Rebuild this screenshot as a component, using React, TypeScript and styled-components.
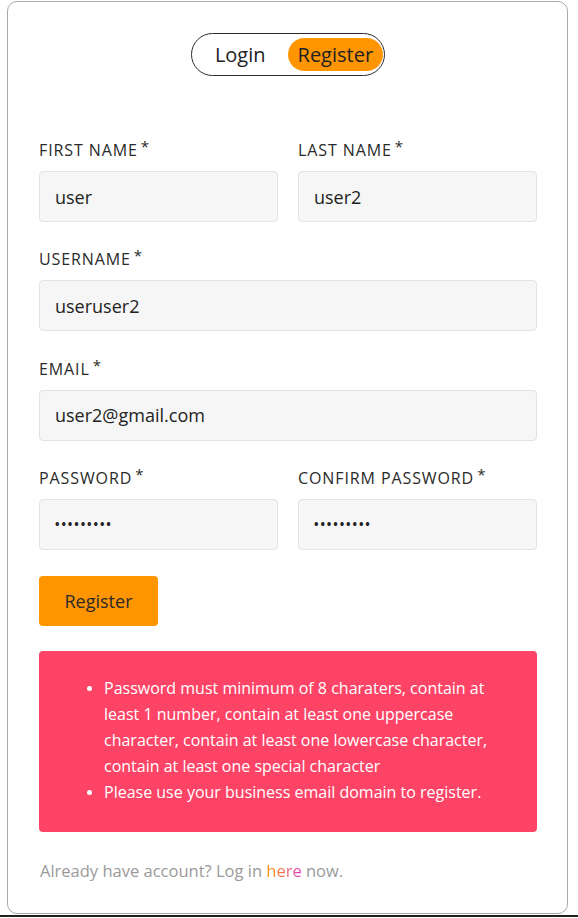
import React from "react";
import styled, { createGlobalStyle } from "styled-components";

const Global = createGlobalStyle`
  html, body { margin: 0; padding: 0; background: #fff; }
  body { font-family: "Open Sans", Lato, sans-serif; color: #222; }
  * { box-sizing: border-box; }
`;

const Page = styled.div`
  width: 578px;
  padding-top: 1px;
`;

const Card = styled.div`
  margin-left: 7px;
  width: 561px;
  height: 913px;
  border: 1px solid #a9a9a9;
  border-radius: 10px;
  padding: 31px 30px 0 31px;
  display: flex;
  flex-direction: column;
`;

const BottomRule = styled.div`
  height: 2px;
  margin-top: 1px;
  background: #1f1f1f;
`;

const ToggleWrap = styled.div`
  align-self: center;
  display: flex;
  align-items: center;
  gap: 12px;
  height: 43px;
  padding: 0 1px 0 13px;
  border: 1px solid #2b2b2b;
  border-radius: 22px;
`;

const ToggleItem = styled.span<{ $active?: boolean }>`
  height: 33px;
  display: flex;
  align-items: center;
  padding: 0 10px;
  border-radius: 17px;
  font-size: 20px;
  color: #222;
  background: ${(p) => (p.$active ? "#ff9500" : "transparent")};
`;

const Form = styled.div`
  margin-top: 62px;
  display: flex;
  flex-direction: column;
  gap: 25.4px;
`;

const Row = styled.div<{ $cols: number }>`
  display: grid;
  grid-template-columns: repeat(${(p) => p.$cols}, 1fr);
  column-gap: 20px;
`;

const Field = styled.div`
  display: flex;
  flex-direction: column;
  gap: 11px;
`;

const Label = styled.label`
  font-size: 16px;
  line-height: 22px;
  height: 22px;
  color: #2a2a2a;
  letter-spacing: 0.9px;
  padding-top: 1px;
`;

const Star = styled.sup`
  font-size: 15px;
  margin-left: 3px;
  vertical-align: top;
  position: relative;
  top: -4px;
`;

const Input = styled.div`
  height: 51px;
  border: 1px solid #e3e3e3;
  border-radius: 4px;
  background: #f6f6f6;
  padding: 0 15px;
  display: flex;
  align-items: center;
  font-size: 18px;
  color: #222;
`;

const Dots = styled.span`
  font-size: 12px;
  letter-spacing: 1.9px;
  font-weight: 700;
`;

const SubmitButton = styled.button`
  align-self: flex-start;
  width: 119px;
  height: 50px;
  border: none;
  border-radius: 4px;
  background: #ff9500;
  font-family: inherit;
  font-size: 18px;
  color: #2a2a2a;
`;

const Alert = styled.div`
  height: 181px;
  border-radius: 4px;
  background: #fd4466;
  color: #fff;
  padding: 24px 24px 0 24px;
  font-size: 16px;
  line-height: 26px;
`;

const List = styled.ul`
  margin: 0;
  padding-left: 41px;
  li::marker { font-size: 14px; }
`;

const Footer = styled.p`
  margin: 27px 0 0 1px;
  font-size: 16.5px;
  line-height: 24px;
  color: #9a9a9a;
`;

const Here = styled.span`
  background: linear-gradient(90deg, #ff9a00, #e040c0);
  -webkit-background-clip: text;
  background-clip: text;
  color: transparent;
`;

const Req = ({ children }: { children: React.ReactNode }) => (
  <Label>
    {children}
    <Star>*</Star>
  </Label>
);

export default function App() {
  return (
    <Page>
      <Global />
      <Card>
        <ToggleWrap>
          <ToggleItem>Login</ToggleItem>
          <ToggleItem $active>Register</ToggleItem>
        </ToggleWrap>
        <Form>
          <Row $cols={2}>
            <Field>
              <Req>FIRST NAME</Req>
              <Input>user</Input>
            </Field>
            <Field>
              <Req>LAST NAME</Req>
              <Input>user2</Input>
            </Field>
          </Row>
          <Row $cols={1}>
            <Field>
              <Req>USERNAME</Req>
              <Input>useruser2</Input>
            </Field>
          </Row>
          <Row $cols={1}>
            <Field>
              <Req>EMAIL</Req>
              <Input>user2@gmail.com</Input>
            </Field>
          </Row>
          <Row $cols={2}>
            <Field>
              <Req>PASSWORD</Req>
              <Input>
                <Dots>•••••••••</Dots>
              </Input>
            </Field>
            <Field>
              <Req>CONFIRM PASSWORD</Req>
              <Input>
                <Dots>•••••••••</Dots>
              </Input>
            </Field>
          </Row>
          <SubmitButton>Register</SubmitButton>
          <Alert>
            <List>
              <li>
                Password must minimum of 8 charaters, contain at least 1 number,
                contain at least one uppercase character, contain at least one
                lowercase character, contain at least one special character
              </li>
              <li>Please use your business email domain to register.</li>
            </List>
          </Alert>
        </Form>
        <Footer>
          Already have account? Log in <Here>here</Here> now.
        </Footer>
      </Card>
      <BottomRule />
    </Page>
  );
}
